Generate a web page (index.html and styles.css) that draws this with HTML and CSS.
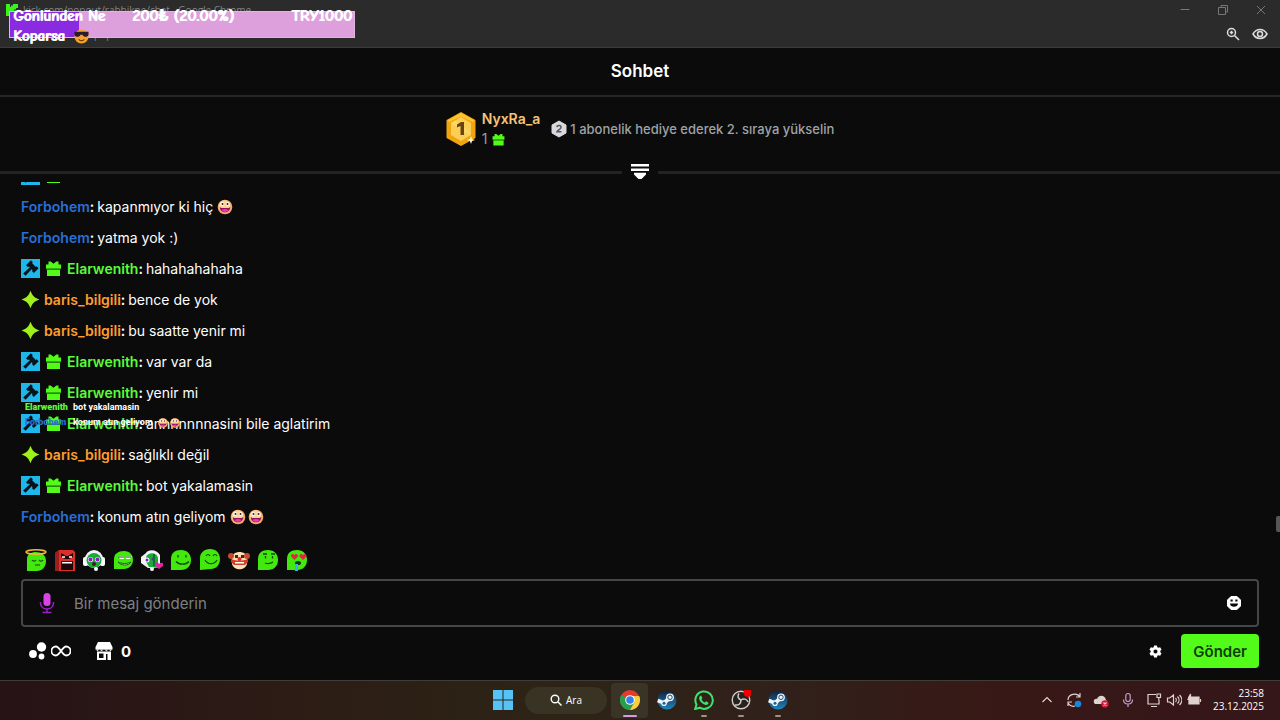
FILE: index.html
```html
<!DOCTYPE html>
<html lang="tr">
<head>
    <meta charset="UTF-8">
    <title>Sohbet</title>
    <meta name="viewport" content="width=device-width, initial-scale=1.0">
    <link rel="stylesheet" href="styles.css">
</head>
<body>
    <!-- shared icons -->
    <svg class="sprite" aria-hidden="true">
        <symbol id="mod" viewBox="0 0 19 19">
            <rect width="19" height="19" fill="#1fb6ea"/>
            <g fill="#07131a" transform="rotate(45 11.5 7.5)">
                <path d="M10.200 8h2.600l.4 11h-3.400z"/>
                <path d="M8 5.500h7v4.500H8z"/>
                <path d="M6 4.300h2.800v6.800H6zM14.200 4.300H17v6.800h-2.800z"/>
            </g>
        </symbol>
        <symbol id="gift" viewBox="0 0 19 19">
            <path d="M4.500 2.500h2.200l2.800 2.300 2.800-2.300h2.200v3H17v4.200H2V5.500h2.500zM3 10.500h13V17H3z" fill="#53fc18"/>
            <path d="M2 9.700h15v.8H2z" fill="#1f8a0a"/>
        </symbol>
        <symbol id="spark" viewBox="0 0 19 19">
            <path d="M9.500.8C11.500 6 13 7.500 18.500 9.500 13 11.500 11.500 13 9.500 18.200 7.500 13 6 11.500.5 9.500 6 7.500 7.500 6 9.500.8z" fill="#a0f01c"/>
        </symbol>
        <symbol id="grin" viewBox="0 0 18 18">
            <circle cx="9" cy="9" r="7.300" fill="#f8a868"/>
            <circle cx="8.500" cy="8" r="5.800" fill="#fcd596"/>
            <circle cx="6.200" cy="6" r="1.900" fill="#fff"/><circle cx="11.800" cy="6" r="1.900" fill="#fff"/>
            <circle cx="6.500" cy="6" r="1" fill="#3b1a1a"/><circle cx="11.500" cy="6" r="1" fill="#3b1a1a"/>
            <path d="M3.800 9h10.400c0 7-10.400 7-10.400 0z" fill="#8c1263"/>
            <path d="M4.500 9h9v.8h-9z" fill="#fff"/>
            <path d="M5.500 12c2-1.200 5-1.200 7 0-1.600 2.500-5.400 2.500-7 0z" fill="#e83bb0"/>
        </symbol>
        <symbol id="steam" viewBox="0 0 20 20">
            <linearGradient id="steam-bg" x2="0" y2="1"><stop stop-color="#10203f"/><stop offset="1" stop-color="#1f86bd"/></linearGradient>
            <circle cx="10" cy="10" r="9.500" fill="url(#steam-bg)"/>
            <path d="M.7 10.500 7 13l5-4.500" stroke="#eef4f8" stroke-width="4" fill="none" stroke-linejoin="round"/>
            <circle cx="7" cy="13.200" r="2.800" fill="#eef4f8"/><circle cx="7" cy="13.200" r="1.500" fill="#20608d"/>
            <circle cx="13" cy="7.300" r="3.900" fill="#eef4f8"/><circle cx="13" cy="7.300" r="2.200" fill="none" stroke="#24476b"/>
        </symbol>
        <symbol id="blob" viewBox="0 0 22 22">
            <path d="M1 21V10C1 4 5 1 11 1s10 4 10 10-4 10-10 10z" fill="#43e80f"/>
        </symbol>
    </svg>

    <div class="window">
        <header class="browser">
            <div class="title-bar">
                <svg class="favicon" viewBox="0 0 14 14"><path d="M1 1h4v3h1V2.500h2V1h5v4h-2v1.500H9v1h2V9h2v4H8v-1.500H6V10H5v3H1z" fill="#35f51b"/></svg>
                <span class="page-title">kick.com/popout/rabbikne/chat - Google Chrome</span>
                <div class="window-buttons">
                    <button type="button" aria-label="Simge durumuna küçült"><svg viewBox="0 0 12 12"><path d="M1.500 5.500h9"/></svg></button>
                    <button type="button" aria-label="Geri yükle"><svg viewBox="0 0 12 12"><path d="M1.500 3.500h7v7h-7zM4 3.500v-2h6.500V8h-2"/></svg></button>
                    <button type="button" aria-label="Kapat"><svg viewBox="0 0 12 12"><path d="m2 2 8 8M10 2l-8 8"/></svg></button>
                </div>
            </div>
            <div class="address-bar">
                <span class="url">popout/rabbikne/chat</span>
                <button type="button" aria-label="Yakınlaştır"><svg viewBox="0 0 16 16"><circle cx="6.500" cy="6.500" r="4"/><path d="m9.500 9.500 4.500 4.500M6.500 4.800v3.400M4.800 6.500h3.400"/></svg></button>
                <button type="button" aria-label="İzleme engellendi"><svg viewBox="0 0 16 16"><path d="M1 8c3.500-6 10.500-6 14 0-3.500 6-10.500 6-14 0z"/><circle cx="8" cy="8" r="2.500"/></svg></button>
            </div>
        </header>

        <div class="donation">
            <div class="donation-fill"></div>
            <span class="donation-name">Gönlünden Ne Koparsa <svg viewBox="0 0 16 16"><circle cx="8" cy="8" r="7.500" fill="#f2a32b"/><path d="M.5 3h15v3c-1 3-5 3-6.500 0H7C5.500 9 1.500 9 .5 6z" fill="#2b1c2c"/><path d="M5 11c2 2 4 2 6 0" stroke="#7a3a10" stroke-width="1.300" fill="none"/></svg></span>
            <span class="donation-amount">200₺ (20.00%)</span>
            <span class="donation-goal">TRY1000</span>
        </div>

        <main class="chat">
            <h1 class="chat-title">Sohbet</h1>

            <section class="leaders">
                <svg class="medal" viewBox="0 0 30 34">
                    <path d="M15 1 28.500 8.500v17L15 33 1.500 25.500v-17z" fill="#f0a510" stroke="#f0a510" stroke-width="2" stroke-linejoin="round"/>
                    <path d="M15 1 28.500 8.500 27 10 15 4.500 3 10 1.500 8.500z" fill="#fdc62c"/>
                    <path d="m15 5 10 6v12l-10 6-10-6V11z" fill="#fbcf55"/>
                    <path d="M9 8.600 24 20v3.600L5 11z" fill="#fde084" opacity=".5"/>
                    <path d="M11 12.500 15 10h3v13h-3.500v-9L11 15.500z" fill="#6b430c"/>
                    <path d="m25 24 1.100 2.900L29 28l-2.900 1.100L25 32l-1.100-2.900L21 28l2.900-1.100z" fill="#fff3c9"/>
                </svg>
                <div class="leader">
                    <span class="leader-name">NyxRa_a</span>
                    <span class="leader-gifts">1 <svg><use href="#gift"/></svg></span>
                </div>
                <p class="leader-hint">
                    <svg viewBox="0 0 16 18"><path d="m8 1 7 4v8l-7 4-7-4V5z" fill="#d9dadd" stroke="#d9dadd" stroke-linejoin="round"/><path d="M5.800 7.200c.3-2.300 4.300-2.100 4.200.2 0 1.600-3 2.500-4 4.300h4.400" fill="none" stroke="#55575c" stroke-width="1.500"/></svg>
                    1 abonelik hediye ederek 2. sıraya yükselin
                </p>
            </section>

            <div class="divider">
                <button type="button" aria-label="Sıralamayı genişlet"><svg viewBox="0 0 18 16"><path d="M0 0h18v2.500H0zM0 4.500h18V7H0zM3 8.800h12v1.700L10.500 15h-3L3 10.500z" fill="#fff"/></svg></button>
            </div>

            <div class="messages">
                <div class="message"><svg class="badge"><use href="#mod"/></svg><svg class="badge"><use href="#gift"/></svg></div>
                <div class="message"><b class="blue">Forbohem<i>:</i></b><span>kapanmıyor ki hiç</span><span class="faces"><svg><use href="#grin"/></svg></span></div>
                <div class="message"><b class="blue">Forbohem<i>:</i></b><span>yatma yok :)</span></div>
                <div class="message"><svg class="badge"><use href="#mod"/></svg><svg class="badge"><use href="#gift"/></svg><b class="green">Elarwenith<i>:</i></b><span>hahahahahaha</span></div>
                <div class="message"><svg class="badge"><use href="#spark"/></svg><b class="orange">baris_bilgili<i>:</i></b><span>bence de yok</span></div>
                <div class="message"><svg class="badge"><use href="#spark"/></svg><b class="orange">baris_bilgili<i>:</i></b><span>bu saatte yenir mi</span></div>
                <div class="message"><svg class="badge"><use href="#mod"/></svg><svg class="badge"><use href="#gift"/></svg><b class="green">Elarwenith<i>:</i></b><span>var var da</span></div>
                <div class="message"><svg class="badge"><use href="#mod"/></svg><svg class="badge"><use href="#gift"/></svg><b class="green">Elarwenith<i>:</i></b><span>yenir mi</span></div>
                <div class="message"><svg class="badge"><use href="#mod"/></svg><svg class="badge"><use href="#gift"/></svg><b class="green">Elarwenith<i>:</i></b><span>annnnnnnasini bile aglatirim</span></div>
                <div class="message"><svg class="badge"><use href="#spark"/></svg><b class="orange">baris_bilgili<i>:</i></b><span>sağlıklı değil</span></div>
                <div class="message"><svg class="badge"><use href="#mod"/></svg><svg class="badge"><use href="#gift"/></svg><b class="green">Elarwenith<i>:</i></b><span>bot yakalamasin</span></div>
                <div class="message"><b class="blue">Forbohem<i>:</i></b><span>konum atın geliyom</span><span class="faces"><svg><use href="#grin"/></svg><svg><use href="#grin"/></svg></span></div>
            </div>
            <div class="scroll-thumb"></div>

            <div class="emotes">
                <button type="button" aria-label="Melek"><svg viewBox="0 0 22 22"><path d="M2 22V10c0-5 4-7 9-7s10 3 10 9-4 10-9 10z" fill="#43e80f"/><ellipse cx="11" cy="3" rx="10" ry="2.200" fill="none" stroke="#f6b73c" stroke-width="1.500"/><path d="M7 11c1 1.500 3 1.500 4 0M14 11c1 1.500 3 1.500 4 0M10 16h5" fill="none" stroke="#0d4a08" stroke-width="1.200"/></svg></button>
                <button type="button" aria-label="Kızgın"><svg viewBox="0 0 22 22"><path d="M1 22V4l4-3h14l2 2v19z" fill="#dc2f2b"/><path d="M1 4 5 1v21H1z" fill="#9c1f20"/><path d="m7 4 5 3h2l5-3v4l-4 2h-4L7 8z" fill="#1c0709"/><path d="M8 8h3M15 8h3" stroke="#fff" stroke-width="1.500"/><path d="M7 12h12v9H7z" fill="#1c0709"/><path d="M8 13h10v1.500H8z" fill="#fff"/></svg></button>
                <button type="button" aria-label="Kulaklıklı"><svg viewBox="0 0 22 22"><circle cx="11" cy="10" r="9" fill="#f2f2f2"/><rect y="8" width="5" height="9" rx="2" fill="#fff"/><rect x="17" y="8" width="5" height="9" rx="2" fill="#fff"/><circle cx="11" cy="11.500" r="7.500" fill="#18ab3c"/><circle cx="7.500" cy="10.500" r="2.600" fill="#f3d5ff"/><circle cx="14.500" cy="10.500" r="2.600" fill="#f3d5ff"/><circle cx="7.500" cy="10.500" r="1.900" fill="#8c1bc0"/><circle cx="14.500" cy="10.500" r="1.900" fill="#8c1bc0"/><circle cx="11" cy="15" r="2" fill="#50122a"/><circle cx="13" cy="20" r="2" fill="#fff"/></svg></button>
                <button type="button" aria-label="Sırıtan"><svg viewBox="0 0 22 22"><path d="M2 20V10c0-5 4-8 10-8s9 4 9 9-4 9-9 9z" fill="#43e80f"/><path d="M6 7h6v3H8zM14 7h6l-2 3h-4z" fill="#e9ffdf"/><path d="M6 8h6M14 8h5" stroke="#175b10"/><path d="M6 13c4 2 9 2 13 0-2 4-10 4-13 0z" fill="#dfffd1" stroke="#155e0b"/></svg></button>
                <button type="button" aria-label="Yayıncı"><svg viewBox="0 0 22 22"><path d="M5 4C7 0 16 0 19 6v13H7L0 14V8z" fill="#f2f2f2"/><path d="M5 8c2-5 11-5 12 1v10l-9-1-3-5z" fill="#18ab3c"/><circle cx="6" cy="11" r="2.500" fill="#fff"/><circle cx="6" cy="11" r="1.500" fill="#8c1bc0"/><circle cx="12" cy="10" r="1.500" fill="#6b26a0"/><path d="M13 5v12" stroke="#087525" stroke-width="2"/><circle cx="11" cy="20" r="2" fill="#fff"/><path d="m18 20-4-4c-1-3 3-4 4-1 3-3 6 0 4 2z" fill="#e620a7"/></svg></button>
                <button type="button" aria-label="Gülümseyen"><svg><use href="#blob"/><g fill="none" stroke="#0c4b08" stroke-width="1.300"><path d="M8 6v2.500M16 6v2.500M6 12.500c3 3.500 10 3.500 13 0"/></g></svg></button>
                <button type="button" aria-label="Mutlu"><svg viewBox="0 0 22 22"><path d="M1 21V9c0-5 4-9 10-9s10 4 10 10-4 10-9 10z" fill="#43e80f"/><path d="M7 7c1-2 3-2 4 0M14 7c1-2 3-2 4 0M6 11c3 5 9 5 12 0" fill="none" stroke="#0c4b08" stroke-width="1.200"/></svg></button>
                <button type="button" aria-label="Palyaço"><svg viewBox="0 0 22 22"><path d="M4 9c0-8 15-8 15 0v6c-2 7-13 7-15 0z" fill="#fbe2b4"/><circle cx="3" cy="7" r="3" fill="#c64c2d"/><circle cx="19" cy="7" r="3" fill="#c64c2d"/><path d="M3 10c6 2 11 2 17 0v3l-3 3H6l-3-3z" fill="#cf4125"/><path d="M7 13h9v1.500H7z" fill="#fff"/><path d="M7 6h3v3H7zM13 6h3v3h-3z" fill="#3f251a"/><circle cx="11.500" cy="10" r="2" fill="#e62421"/></svg></button>
                <button type="button" aria-label="Düşünen"><svg><use href="#blob"/><g fill="none" stroke="#0c4b08" stroke-width="1.300"><path d="M6 5h4M14 5h4M8.500 7v2.500M15.500 7v2.500M8 14c3 1 5 1 8-1"/></g></svg></button>
                <button type="button" aria-label="Aşık"><svg><use href="#blob"/><path d="M8.500 11 5 7.500c0-3 2.500-3 3.500-1 1-2 3.500-2 3.500 1zM17 11l-3.500-3.500c0-3 2.500-3 3.500-1 1-2 3.500-2 3.500 1z" fill="#e52345"/><ellipse cx="12" cy="14" rx="3" ry="2" fill="#15320e"/><path d="M9 15h3v7H9z" fill="#2cb6e0"/></svg></button>
            </div>

            <form class="composer">
                <div class="message-box">
                    <svg class="mic" viewBox="0 0 16 22"><rect x="4.500" y="1" width="7" height="13" rx="3.500" fill="#d944e8"/><path d="M1.500 10v1c0 8 13 8 13 0v-1M8 17v4M3.500 20.500h9" fill="none" stroke="#9a20c4" stroke-width="1.500"/></svg>
                    <input type="text" aria-label="Mesaj" placeholder="Bir mesaj gönderin">
                    <button type="button" aria-label="İfade ekle"><svg viewBox="0 0 14 14"><path d="M4 .5h6L13.500 4v6L10 13.500H4L.5 10V4z" fill="#fff" stroke="#fff" stroke-linejoin="round"/><path d="M3.500 3.500h2.200v2H3.500zM8.300 3.500h2.200v2H8.300zM3 7.500h8c0 4.300-8 4.300-8 0z" fill="#0b0b0b"/></svg></button>
                </div>
                <div class="tools">
                    <button type="button" class="slow" aria-label="Sohbet kimliği">
                        <svg class="bubbles" viewBox="0 0 18 18"><circle cx="12.500" cy="5" r="4.700" fill="#fff"/><circle cx="4" cy="12" r="3.900" fill="#fff"/><circle cx="12.500" cy="14.500" r="2.900" fill="#fff"/></svg>
                        <svg class="infinity" viewBox="0 0 20 12"><path d="M10 6C7.500 2.500 6.500 1.500 4.900 1.500a4.500 4.500 0 0 0 0 9C6.500 10.500 7.500 9.500 10 6s3.500-4.500 5.100-4.500a4.500 4.500 0 0 1 0 9C13.500 10.500 12.500 9.500 10 6z" fill="none" stroke="#fff" stroke-width="1.800"/></svg>
                    </button>
                    <button type="button" class="points">
                        <svg viewBox="0 0 18 18"><path d="M3 0h12l2.500 5v2.500H.5V5zM2 9.500h14V18h-3.500v-6H11v6H2zm2 2V16h4.500v-4.500z" fill="#fff" fill-rule="evenodd"/><path d="M.5 7.500 2.500 9l2-1.500 2 1.500L9 7.500 11.500 9l2-1.500 2 1.500 2-1.500z" fill="#fff"/></svg>
                        0
                    </button>
                    <button type="button" class="settings" aria-label="Ayarlar"><svg viewBox="0 0 14 14"><path fill-rule="evenodd" d="M5.500.5h3L9 2.300l1.200.7 1.800-.5 1.500 2.600L12.200 6.300v1.400l1.300 1.200-1.500 2.600-1.800-.5-1.200.7-.5 1.800h-3L5 11.700 3.800 11l-1.800.5L.5 8.900l1.300-1.200V6.300L.5 5.100 2 2.500l1.800.5L5 2.300zM7 4.800a2.200 2.200 0 1 0 0 4.400 2.200 2.200 0 0 0 0-4.400z" fill="#fff"/></svg></button>
                    <button type="submit" class="send">Gönder</button>
                </div>
            </form>
        </main>

        <div class="stream-chat">
            <div><b class="green">Elarwenith</b> bot yakalamasin</div>
            <div><b class="blue">Forbohem</b> konum atın geliyom <svg><use href="#grin"/></svg><svg><use href="#grin"/></svg></div>
        </div>

        <footer class="taskbar">
            <nav class="apps">
                <button type="button" class="app" aria-label="Başlat"><svg viewBox="0 0 20 20"><path d="M0 0h9.500v9.500H0zM10.500 0H20v9.500h-9.500zM0 10.500h9.500V20H0zM10.500 10.500H20V20h-9.500z" fill="#55c3f5"/></svg></button>
                <button type="button" class="search"><svg viewBox="0 0 12 12"><circle cx="5" cy="5" r="3.800" fill="none" stroke="#fff" stroke-width="1.400"/><path d="m8 8 3.500 3.500" stroke="#fff" stroke-width="1.400"/></svg>Ara</button>
                <button type="button" class="app active" aria-label="Chrome"><svg viewBox="0 0 20 20"><circle cx="10" cy="10" r="10" fill="#e33b2e"/><path d="M10 10 1.300 5A10 10 0 0 0 10 20l5-8z" fill="#27a04b"/><path d="M10 6h9.200A10 10 0 0 1 10 20l4.500-8z" fill="#fdce3a"/><circle cx="10" cy="10" r="4.800" fill="#fff"/><circle cx="10" cy="10" r="3.800" fill="#347fe8"/></svg></button>
                <button type="button" class="app" aria-label="Steam"><svg><use href="#steam"/></svg></button>
                <button type="button" class="app running" aria-label="WhatsApp"><svg viewBox="0 0 20 20"><path d="m1.200 19 1.300-4.600a8.700 8.700 0 1 1 3.300 3.300z" fill="none" stroke="#3fe06c" stroke-width="2"/><path d="M7 5.500 8.500 8l-1 1.200c.8 1.600 1.800 2.500 3.300 3.300L12 11.300l2.600 1.400c-.5 2-2 2.500-3.600 2-3-.9-5-3-5.800-5.500C4.800 7.500 5.500 6 7 5.500z" fill="#3fe06c"/></svg></button>
                <button type="button" class="app running" aria-label="OBS"><svg viewBox="0 0 20 20"><circle cx="10" cy="10" r="8.800" fill="#25221f" stroke="#d2cdc7" stroke-width="1.400"/><path d="M10 10C7 9 6 6 8 3.500M10 10c2.500-2 6-1 7 2M10 10c0 3.500-2 5.500-6 5" fill="none" stroke="#d2cdc7" stroke-width="1.500"/><circle cx="17" cy="2.500" r="4.500" fill="#f00000"/></svg></button>
                <button type="button" class="app running" aria-label="Steam oyun"><svg><use href="#steam"/></svg></button>
            </nav>
            <div class="tray">
                <button type="button" aria-label="Gizli simgeler"><svg viewBox="0 0 16 16"><path d="m3.500 10 4.500-4.500 4.500 4.500"/></svg></button>
                <button type="button" aria-label="Güncelleme"><svg viewBox="0 0 16 16"><path d="M2 8c0-6 9-8 12-3M14 1v4h-4M2 14v-4h4M2 11c2 3 4 4 7 3"/><circle cx="12" cy="12" r="3.300" fill="#1687d9" stroke="none"/></svg></button>
                <button type="button" aria-label="OneDrive"><svg viewBox="0 0 16 16"><path d="M2 12c-3-3 0-6 2-5 2-5 8-4 9 1 2 1 2 4 0 4z" fill="#ded3cf" stroke="none"/><circle cx="12" cy="12" r="3.700" fill="#d61535" stroke="none"/><path d="m10.500 10.500 3 3M13.500 10.500l-3 3"/></svg></button>
                <button type="button" aria-label="Mikrofon"><svg class="tray-mic" viewBox="0 0 16 16"><rect x="5.800" y="1.500" width="4.400" height="8" rx="2.200"/><path d="M3.500 7.500c0 6 9 6 9 0M8 12v3"/></svg></button>
                <button type="button" class="status" aria-label="Ağ, ses ve pil">
                    <svg viewBox="0 0 16 16"><path d="M10 2.500H2v9.500h11V8M5 14.500h6M11 2h3.500v3.500H11zM12.800 5.500V8"/></svg>
                    <svg viewBox="0 0 16 16"><path d="M1.500 6v4h2.200L7.500 13V3L3.700 6zM9.500 6c1 1 1 3 0 4M11.500 4.500c2 2 2 5 0 7M13.500 3c3 3 3 7 0 10"/></svg>
                    <svg viewBox="0 0 16 16"><path d="M3 5h10v7H3z" fill="#ded3cf"/><path d="M14.500 7v3M2 7.500 4.500 2v3.500H6L3.500 10V7.500z" fill="#ded3cf"/></svg>
                </button>
                <time datetime="2025-12-23T23:58">23:58<br>23.12.2025</time>
            </div>
        </footer>
    </div>
</body>
</html>
```

FILE: styles.css
```css
* {
    box-sizing: border-box;
}

body {
    margin: 0;
    background: #0b0b0b;
    color: #fff;
    font-family: Inter, sans-serif;
    font-size: 14px;
}

button {
    display: flex;
    align-items: center;
    justify-content: center;
    padding: 0;
    border: none;
    background: none;
    color: inherit;
    font: inherit;
    cursor: pointer;
}

svg {
    display: block;
    flex: none;
}

.sprite {
    position: absolute;
    width: 0;
    height: 0;
}

.window {
    position: relative;
    display: flex;
    flex-direction: column;
    height: 100vh;
    overflow: hidden;
}

/* browser frame */
.browser {
    background: #2b2b2b;
    border-bottom: 1px solid #3a3d3c;
    color: #858585;
    font-family: "Open Sans", sans-serif;
    font-size: 10px;
}

.title-bar {
    display: flex;
    align-items: center;
    gap: 4px;
    height: 20px;
    padding-left: 5px;
}

.favicon {
    width: 14px;
    height: 14px;
}

.window-buttons {
    display: flex;
    margin-left: auto;
}

.window-buttons button {
    width: 38px;
}

.window-buttons svg {
    width: 12px;
    height: 12px;
    fill: none;
    stroke: #777;
}

.address-bar {
    display: flex;
    align-items: center;
    gap: 11px;
    height: 27px;
    padding: 0 12px 0 94px;
}

.url {
    margin-right: auto;
}

.address-bar svg {
    width: 16px;
    height: 16px;
    fill: none;
    stroke: #ddd;
    stroke-width: 1.5;
}

/* donation goal shown over the window */
.donation {
    position: absolute;
    top: 11px;
    left: 9px;
    display: flex;
    width: 346px;
    height: 27px;
    padding: 0 2px 0 3px;
    border: 1px solid #e2b4e2;
    background: #dda0dd;
    font-family: "Comic Sans MS", "Comic Neue", Lato, sans-serif;
    font-size: 16px;
    font-weight: 900;
    line-height: 20px;
    text-shadow: 1px 0 #fff;
}

.donation-fill {
    position: absolute;
    inset: 0 auto 0 0;
    width: 20%;
    background: #8a2be2;
}

.donation span {
    position: relative;
    top: -6px;
    white-space: nowrap;
}

.donation .donation-name {
    width: 119px;
    font-size: 15px;
    white-space: normal;
}

.donation-name svg {
    display: inline-block;
    width: 15px;
    height: 15px;
    margin-left: 4px;
    vertical-align: -3px;
}

.donation-goal {
    margin-left: auto;
}

/* chat */
.chat {
    position: relative;
    display: flex;
    flex: 1;
    flex-direction: column;
    min-height: 0;
}

.chat-title {
    margin: 0;
    border-bottom: 2px solid #242628;
    font-size: 17px;
    font-weight: 600;
    line-height: 47px;
    text-align: center;
}

.leaders {
    display: flex;
    align-items: center;
    justify-content: center;
    gap: 6px;
    padding: 12px 0 13px;
}

.medal {
    width: 30px;
    height: 34px;
}

.leader {
    display: flex;
    flex-direction: column;
    line-height: 20px;
}

.leader-name {
    color: #f5c377;
    font-weight: 600;
}

.leader-gifts {
    display: flex;
    align-items: center;
    gap: 4px;
    color: #9a9ea3;
}

.leader-gifts svg {
    width: 15px;
    height: 15px;
}

.leader-hint {
    display: flex;
    align-items: center;
    gap: 3px;
    margin: 0 0 0 5px;
    color: #9da3a8;
    font-size: 13px;
    font-weight: 500;
}

.leader-hint svg {
    width: 16px;
    height: 18px;
}

.divider {
    display: flex;
    align-items: center;
    gap: 9px;
    height: 20px;
}

.divider::before,
.divider::after {
    content: "";
    flex: 1;
    height: 3px;
    background: #222324;
}

.divider svg {
    width: 18px;
    height: 16px;
}

.messages {
    display: flex;
    flex: 1;
    flex-direction: column;
    justify-content: flex-end;
    min-height: 0;
    padding: 0 21px 1px;
    overflow: hidden;
}

.message {
    display: flex;
    flex: none;
    align-items: center;
    gap: 3px;
    height: 31px;
}

.message b {
    font-weight: 600;
}

.message i {
    color: #fff;
    font-style: normal;
}

.badge {
    width: 19px;
    height: 19px;
    margin-right: 1px;
}

.faces {
    display: flex;
}

.faces svg {
    width: 18px;
    height: 18px;
}

.blue {
    color: #2a6fd6;
}

.green {
    color: #5bfb3a;
}

.orange {
    color: #ff9d2e;
}

.scroll-thumb {
    position: absolute;
    right: 0;
    bottom: 148px;
    width: 4px;
    height: 16px;
    border-radius: 2px 0 0 2px;
    background: #565656;
}

.emotes {
    display: flex;
    gap: 7px;
    padding: 16px 25px 8px;
}

.emotes svg {
    width: 22px;
    height: 22px;
}

.composer {
    padding: 0 21px 12px;
}

.message-box {
    display: flex;
    align-items: center;
    gap: 19px;
    height: 48px;
    padding: 0 16px;
    border: 2px solid #454648;
    border-radius: 4px;
}

.mic {
    width: 16px;
    height: 22px;
}

.message-box input {
    flex: 1;
    min-width: 0;
    padding: 0;
    border: none;
    outline: none;
    background: none;
    color: #fff;
    font: inherit;
    font-size: 15px;
}

.message-box input::placeholder {
    color: #7d8083;
}

.message-box button svg {
    width: 14px;
    height: 14px;
}

.tools {
    display: flex;
    align-items: center;
    padding: 7px 0 0 8px;
}

.slow {
    gap: 4px;
}

.bubbles {
    width: 18px;
    height: 18px;
}

.infinity {
    width: 20px;
    height: 12px;
}

.points {
    gap: 8px;
    margin-left: 24px;
    font-size: 15px;
    font-weight: 700;
}

.points svg {
    width: 18px;
    height: 18px;
}

.settings {
    margin-left: auto;
}

.settings svg {
    width: 13px;
    height: 13px;
}

.send {
    height: 34px;
    margin-left: 19px;
    padding: 0 12px;
    border-radius: 4px;
    background: #53fc18;
    color: #0e3b08;
    font-size: 15px;
    font-weight: 600;
}

/* small chat overlay of the stream */
.stream-chat {
    position: absolute;
    top: 400px;
    left: 25px;
    font-family: Roboto, sans-serif;
    font-size: 9px;
    font-weight: 700;
    line-height: 15px;
}

.stream-chat div {
    display: flex;
    align-items: center;
    gap: 4px;
}

.stream-chat b {
    min-width: 44px;
}

.stream-chat svg {
    width: 12px;
    height: 12px;
}

.stream-chat svg + svg {
    margin-left: -4px;
}

/* taskbar */
.taskbar {
    display: grid;
    grid-template-columns: 1fr auto 1fr;
    height: 40px;
    padding-bottom: 1px;
    border-top: 1px solid #403c38;
    background: linear-gradient(90deg, #271216, #2c1b15 20%, #2c2416 42%, #30211a 60%, #381816 78%, #35161a);
    font-family: "Open Sans", sans-serif;
    font-size: 10px;
}

.apps {
    display: flex;
    grid-column: 2;
    align-items: center;
}

.app {
    position: relative;
    width: 37px;
    height: 35px;
}

.app svg {
    width: 20px;
    height: 20px;
}

.active {
    border-radius: 4px;
    background: #393426;
}

.active::after,
.running::after {
    content: "";
    position: absolute;
    bottom: 1px;
    left: 50%;
    width: 6px;
    height: 2px;
    margin-left: -3px;
    border-radius: 1px;
    background: #9b9186;
}

.active::after {
    width: 14px;
    margin-left: -7px;
    background: #d39be0;
}

.search {
    gap: 4px;
    width: 82px;
    height: 27px;
    margin: 0 4px;
    border-radius: 14px;
    background: #383323;
}

.search svg {
    width: 12px;
    height: 12px;
}

.tray {
    display: flex;
    align-items: center;
    justify-content: flex-end;
    padding-right: 16px;
}

.tray button {
    width: 27px;
}

.tray svg {
    width: 16px;
    height: 16px;
    fill: none;
    stroke: #ded3cf;
    stroke-width: 1.2;
}

.tray .tray-mic {
    stroke: #c39bc9;
}

.tray .status {
    gap: 4px;
    width: 60px;
    margin: 0 9px 0 3px;
}

.tray time {
    line-height: 13px;
    text-align: right;
}
```
